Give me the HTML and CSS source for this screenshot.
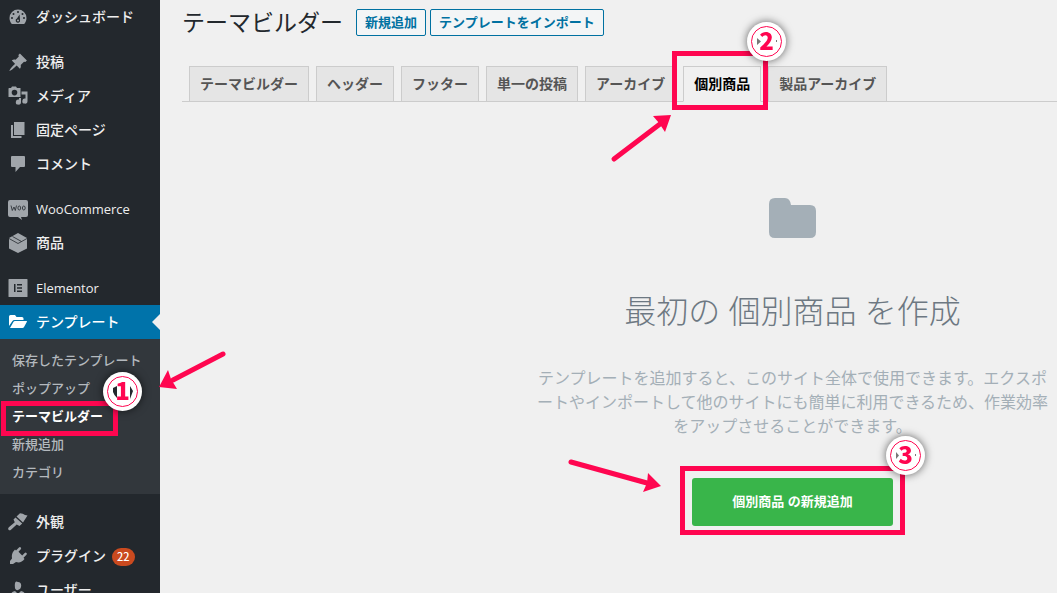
FILE: index.html
```html
<!DOCTYPE html>
<html lang="ja">
<head>
    <meta charset="UTF-8">
    <meta name="viewport" content="width=device-width, initial-scale=1.0">
    <title>テーマビルダー</title>
    <link rel="stylesheet" href="styles.css">
</head>
<body>
    <div class="layout">
        <nav class="sidebar">
            <ul class="menu">
                <li><a href="#"><svg class="icon" viewBox="0 0 20 20"><path fill-rule="evenodd" d="M3.800 17h12.400c1.400-1.600 2.300-3.700 2.300-6a8.500 8.500 0 0 0-17 0c0 2.300.9 4.400 2.300 6zM10 4a1 1 0 1 1 0 2 1 1 0 0 1 0-2zM5.500 6a1 1 0 1 1 0 2 1 1 0 0 1 0-2zM14.500 6a1 1 0 1 1 0 2 1 1 0 0 1 0-2zM4 10a1 1 0 1 1 0 2 1 1 0 0 1 0-2zM16 10a1 1 0 1 1 0 2 1 1 0 0 1 0-2zM11.600 7.500l.4 5.500a2.200 2.200 0 1 1-3-1.500zM10 12.500a1 1 0 1 0 0 2 1 1 0 0 0 0-2z"/></svg>ダッシュボード</a></li>
                <li class="group"><a href="#"><svg class="icon" viewBox="0 0 20 20"><path d="M10.400 3.100l1.500-1.600 7 7-1.600 1.500-1.300-.3-3.300 3.300c.4 1.500.1 2.900-.8 3.800l-3.200-3.300C6.500 15.500 3 18.800 1.500 18.900 1.500 17.500 5 14 7 11.800L3.800 8.500c1-.9 2.400-1.200 3.800-.8l3.200-3.300z"/></svg>投稿</a></li>
                <li><a href="#"><svg class="icon" viewBox="0 0 20 20"><path fill-rule="evenodd" d="M1 2h2l1-1.500h4L9 2h3.500v9H.5V2.500zM6.500 3.800a2.800 2.800 0 1 0 0 5.600 2.800 2.800 0 0 0 0-5.600zM13.500 5.500H19.500V15a2.600 2.600 0 1 1-2-2.500V8.500h-4zM11 12h2v4a2.600 2.600 0 1 1-2-2.500z"/></svg>メディア</a></li>
                <li><a href="#"><svg class="icon" viewBox="0 0 20 20"><path d="M6 2h10.500v13H6zM3 5h2v11h8.500v2H3z"/></svg>固定ページ</a></li>
                <li><a href="#"><svg class="icon" viewBox="0 0 20 20"><path d="M4 2h12q1 0 1 1v9q0 1-1 1h-4l-4.500 5V13H4q-1 0-1-1V3q0-1 1-1z"/></svg>コメント</a></li>
                <li class="group latin"><a href="#"><svg class="icon" viewBox="0 0 20 20"><path d="M2 1h16q2 0 2 2v13q0 2-2 2h-5l1 3-4-3H2q-2 0-2-2V3q0-2 2-2z"/><g class="icon-line"><path d="M3 6.500l1.300 5L6 8l1.300 3.500 1.200-5"/><ellipse cx="11.300" cy="9" rx="1.400" ry="2"/><ellipse cx="15.800" cy="9" rx="1.400" ry="2"/></g></svg>WooCommerce</a></li>
                <li><a href="#"><svg class="icon" viewBox="0 0 20 20"><path d="M10 0l9 5v10.500L10 20l-9-4.500V5z"/><path class="icon-line" d="M1 5.500l9 5 9-5M4.500 3.500l9 5"/></svg>商品</a></li>
                <li class="group latin"><a href="#"><svg class="icon" viewBox="0 0 20 20"><path fill-rule="evenodd" d="M1 1h18q.5 0 .5.5v17q0 .5-.5.5H1q-.5 0-.5-.5v-17Q.5 1 1 1zM6 6v8h1.500V6zM9 6v1.500h5V6zM9 9.200v1.500h5V9.200zM9 12.500V14h5v-1.500z"/></svg>Elementor</a></li>
                <li class="current">
                    <a href="#"><svg class="icon" viewBox="0 0 20 20"><path d="M1 14V4.500Q1 3 2.500 3H7l1.500 2H14q1.500 0 1.500 1.500V8H6.500Q5 8 4.300 9.200zM2 16l3.400-6q.5-1 1.600-1h11.500q.8 0 .4.800l-3 5.400q-.5.800-1.500.8z"/></svg>テンプレート</a>
                    <ul class="submenu">
                        <li><a href="#">保存したテンプレート</a></li>
                        <li><a href="#">ポップアップ</a></li>
                        <li class="selected">
                            <a href="#">テーマビルダー</a>
                            <span class="mark mark-menu"></span>
                            <svg class="badge badge-menu" viewBox="0 0 39 39"><circle class="disc" cx="19.500" cy="19.500" r="19.500"/><path class="dark" d="M10 16l4-2v12q-3-3-4-6zM27 14l3 5-3 8z"/><circle class="ring" cx="19.500" cy="19.500" r="15"/><text x="19.500" y="28">1</text></svg>
                            <svg class="arrow arrow-menu" viewBox="0 0 68 42"><path class="shaft" d="M64 5L14 31"/><path d="M0 38L9 21l3 9 6 10z"/></svg>
                        </li>
                        <li><a href="#">新規追加</a></li>
                        <li><a href="#">カテゴリ</a></li>
                    </ul>
                </li>
                <li class="group"><a href="#"><svg class="icon" viewBox="0 0 20 20"><path d="M8.500 4.500L12 1.300q3 .2 5 1.700l2.500.5-4.500 7zM7.500 5.500l6.700 6-2.700 2.500-2.800-1.500L3 17.800q-1.500 1-2.500 0t.3-2.600l6-5-1.300-2.700z"/></svg>外観</a></li>
                <li><a href="#"><svg class="icon" viewBox="0 0 20 20"><path d="M8 4.500l3-3q1-.8 1.800 0t0 1.700l-2.300 2.600 3.700 3.700 2.500-2.500q1-.8 1.800 0t0 1.800l-3 3 1 1.200q-3.500 4.500-8.500 3L5 18H2v-3l2-2.500Q3 7.500 7 3.500z"/></svg>プラグイン<span class="count">22</span></a></li>
                <li><a href="#"><svg class="icon" viewBox="0 0 20 20"><path d="M10 2q3.200 0 3.200 3.500T10 10 6.800 5.500 10 2zM3 18v-3q0-3.500 4-4l3 3 3-3q4 .5 4 4v3z"/></svg>ユーザー</a></li>
            </ul>
        </nav>

        <main class="content">
            <header class="page-head">
                <h1>テーマビルダー</h1>
                <div class="actions">
                    <a class="action" href="#">新規追加</a>
                    <button class="action" type="button">テンプレートをインポート</button>
                </div>
            </header>

            <nav class="tabs">
                <a href="#">テーマビルダー</a>
                <a href="#">ヘッダー</a>
                <a href="#">フッター</a>
                <a href="#">単一の投稿</a>
                <a href="#">アーカイブ</a>
                <div class="tab-marked">
                    <a class="active" href="#">個別商品</a>
                    <span class="mark mark-tab"></span>
                    <svg class="badge badge-tab" viewBox="0 0 39 39"><circle class="disc" cx="19.500" cy="19.500" r="19.500"/><path class="hint" d="M10 16l4 3.500-4 3.500zM29 18h1v2h-1z"/><circle class="ring" cx="19.500" cy="19.500" r="15"/><text x="19.500" y="28">2</text></svg>
                    <svg class="arrow arrow-tab" viewBox="0 0 62 50"><path class="shaft" d="M4 46L50 11"/><path d="M61 2L43 3l6 7 6 9z"/></svg>
                </div>
                <a href="#">製品アーカイブ</a>
            </nav>

            <section class="blank">
                <svg class="folder" viewBox="0 0 47 40"><path d="M6 0h10q5 0 6 7h19q6 0 6 6v21q0 6-6 6H6q-6 0-6-6V6q0-6 6-6z"/></svg>
                <h2>最初の 個別商品 を作成</h2>
                <p>テンプレートを追加すると、このサイト全体で使用できます。エクスポートやインポートして他のサイトにも簡単に利用できるため、作業効率をアップさせることができます。</p>
                <div class="create">
                    <button class="create-button" type="button">個別商品 の新規追加</button>
                    <span class="mark mark-create"></span>
                    <svg class="badge badge-create" viewBox="0 0 39 39"><circle class="disc" cx="19.500" cy="19.500" r="19.500"/><path class="hint" d="M10 16l3 3.500-3 3.500zM29 18h1v2h-1z"/><circle class="ring" cx="19.500" cy="19.500" r="15"/><text x="19.500" y="28">3</text></svg>
                    <svg class="arrow arrow-create" viewBox="0 0 94 38"><path class="shaft" d="M4 6L80 27"/><path d="M94 30L81 17l-1 10-4 9z"/></svg>
                </div>
            </section>
        </main>
    </div>
</body>
</html>
```

FILE: styles.css
```css
* {
    box-sizing: border-box;
}
body {
    margin: 0;
    overflow: hidden;
    background: #f0f0f0;
    color: #23282d;
    font-family: "Open Sans", "Noto Sans CJK JP", sans-serif;
    font-size: 14px;
}
a {
    color: inherit;
    text-decoration: none;
}
ul {
    margin: 0;
    padding: 0;
    list-style: none;
}
button {
    font-family: inherit;
    cursor: pointer;
}
.layout {
    display: flex;
    height: 100vh;
}

/* Sidebar */
.sidebar {
    flex: 0 0 160px;
    background: #23282d;
    color: #eee;
    font-family: "Noto Sans CJK JP", sans-serif;
}
.menu > li > a {
    display: flex;
    align-items: flex-start;
    gap: 8px;
    height: 34px;
    padding: 0 8px;
    font-weight: 500;
    line-height: 32px;
    white-space: nowrap;
}
.menu > .group {
    padding-top: 11px;
}
.menu > .latin > a {
    font-family: "Open Sans", sans-serif;
    font-size: 13px;
    line-height: 34px;
}
.icon {
    flex: none;
    width: 20px;
    height: 20px;
    margin-top: 7px;
    fill: #a0a5aa;
    overflow: visible;
}
.icon-line {
    fill: none;
    stroke: #23282d;
    stroke-width: 0.8;
}
.current {
    background: #32373c;
}
.menu > .current > a {
    position: relative;
    background: #0073aa;
    color: #fff;
}
.current > a::after {
    content: "";
    position: absolute;
    top: 9px;
    right: 0;
    border: 8px solid transparent;
    border-right-color: #f0f0f0;
    border-left: 0;
}
.current .icon {
    fill: #fff;
}
.submenu {
    padding: 7px 0 8px;
    color: #b4b9be;
    font-size: 13px;
    font-weight: 500;
}
.submenu a {
    display: block;
    padding: 0 12px;
    line-height: 28px;
    white-space: nowrap;
}
.submenu .selected {
    position: relative;
    color: #fff;
    font-weight: 700;
}
.count {
    height: 18px;
    margin: 9px 0 0 -2px;
    padding: 0 5px;
    border-radius: 9px;
    background: #ca4a1f;
    color: #fff;
    font-size: 11px;
    line-height: 17px;
}

/* Page */
.content {
    flex: 1;
    min-width: 0;
    padding: 8px 0 0 22px;
}
.page-head {
    display: flex;
    align-items: center;
    gap: 13px;
}
.page-head h1 {
    margin: 0;
    font-size: 23px;
    font-weight: 400;
    line-height: 29px;
}
.actions {
    display: flex;
    gap: 4px;
}
.action {
    height: 27px;
    padding: 0 8px;
    border: 1px solid #0071a1;
    border-radius: 2px;
    background: #f3f5f6;
    color: #0071a1;
    font-size: 13px;
    font-weight: 700;
    line-height: 25px;
}
.tabs {
    display: flex;
    gap: 7px;
    margin-top: 29px;
    padding-left: 7px;
    border-bottom: 1px solid #ccc;
}
.tabs a {
    display: block;
    height: 36px;
    margin-bottom: -1px;
    padding: 0 10px;
    border: 1px solid #ccc;
    background: #e5e5e5;
    color: #555;
    font-weight: 700;
    line-height: 34px;
    white-space: nowrap;
}
.tabs .active {
    border-bottom-color: #f0f0f0;
    background: #f0f0f0;
    color: #000;
}
.tab-marked {
    position: relative;
    z-index: 1;
}
.blank {
    display: flex;
    flex-direction: column;
    align-items: center;
    max-width: 529px;
    margin-left: auto;
    padding: 96px 8px 0;
    text-align: center;
}
.folder {
    width: 47px;
    height: 40px;
    fill: #a4afb7;
}
.blank h2 {
    margin: 49px 0 31px;
    color: #6d7882;
    font-size: 32px;
    font-weight: 300;
    line-height: 48px;
}
.blank p {
    margin: 0 0 40px;
    color: #a4afb7;
    font-size: 16px;
    line-height: 24px;
}
.create {
    position: relative;
}
.create-button {
    height: 48px;
    padding: 0 40px 4px;
    border: 0;
    border-radius: 3px;
    background: #39b54a;
    color: #fff;
    font-size: 13px;
    font-weight: 700;
}

/* Numbered marks */
.mark,
.badge,
.arrow {
    position: absolute;
    pointer-events: none;
}
.mark {
    border: 5px solid #ff0650;
}
.badge {
    width: 39px;
    height: 39px;
    overflow: visible;
    filter: drop-shadow(0 0 4px rgba(0, 0, 0, 0.6));
}
.badge .disc {
    fill: #fff;
}
.badge .ring {
    fill: none;
    stroke: #ff0650;
    stroke-width: 1;
}
.badge .dark {
    fill: #23282d;
}
.badge .hint {
    fill: #777;
}
.badge text {
    fill: #ff0650;
    font-family: "Noto Sans CJK JP", sans-serif;
    font-size: 24px;
    font-weight: 900;
    text-anchor: middle;
}
.arrow {
    z-index: 1;
    fill: #ff0650;
}
.shaft {
    stroke: #ff0650;
    stroke-width: 5;
    stroke-linecap: round;
}
.mark-menu {
    top: -1px;
    left: 1px;
    width: 117px;
    height: 35px;
}
.badge-menu {
    top: -30px;
    left: 103px;
}
.arrow-menu {
    top: -53px;
    left: 159px;
    width: 68px;
    height: 42px;
}
.mark-tab {
    inset: -15px -7px -9px -11px;
}
.badge-tab {
    top: -44px;
    right: -25px;
}
.arrow-tab {
    top: 47px;
    right: 89px;
    width: 62px;
    height: 50px;
}
.mark-create {
    inset: -12px -12px -9px;
}
.badge-create {
    top: -42px;
    right: -32px;
}
.arrow-create {
    top: -22px;
    right: 232px;
    width: 94px;
    height: 38px;
}
```
